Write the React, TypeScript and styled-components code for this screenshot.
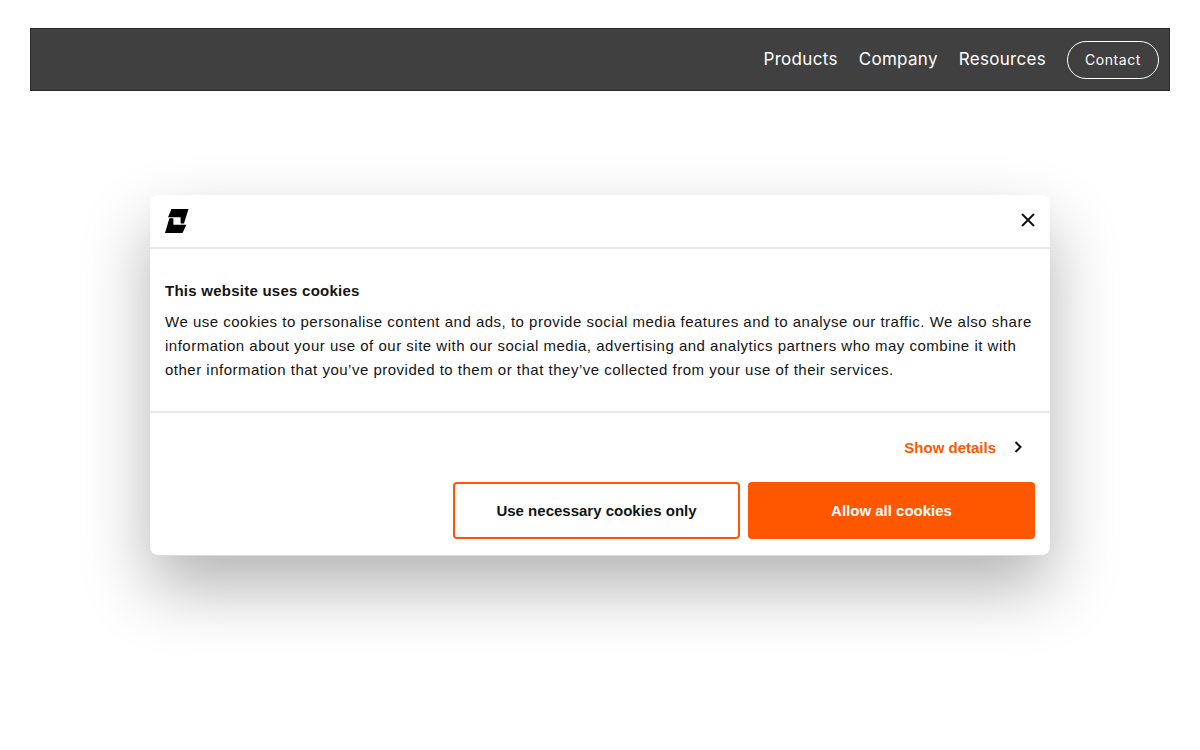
import { FC } from 'react';
import styled, { createGlobalStyle } from 'styled-components';

const GlobalStyle = createGlobalStyle`
  html, body {
    margin: 0;
    padding: 0;
    background: #fff;
  }
  body {
    font-family: 'Liberation Sans', Arial, sans-serif;
  }
`;

const navLinks = ['Products', 'Company', 'Resources'];

const App: FC = () => {
  return (
    <Page>
      <GlobalStyle />
      <Header>
        <Nav>
          {navLinks.map((link) => (
            <NavLink key={link} href="#">
              {link}
            </NavLink>
          ))}
        </Nav>
        <ContactButton>Contact</ContactButton>
      </Header>

      <CookieDialog>
        <DialogTop>
          <svg width="24" height="24" viewBox="0 0 24 24" aria-label="logo">
            <path fill="#000" d="M6.5 0H23.5L19 14.6H15.6V8.2H3Z" />
            <path fill="#000" d="M4.4 9.2H8.4V15.8H21.4L17.5 24H0Z" />
          </svg>
          <CloseButton aria-label="Close">
            <svg width="14" height="14" viewBox="0 0 14 14">
              <path d="M1 1L13 13M13 1L1 13" stroke="#141414" strokeWidth="2" fill="none" />
            </svg>
          </CloseButton>
        </DialogTop>

        <DialogBody>
          <DialogTitle>This website uses cookies</DialogTitle>
          <DialogText>
            We use cookies to personalise content and ads, to provide social media features and to analyse our traffic. We also share
            information about your use of our site with our social media, advertising and analytics partners who may combine it with
            other information that you’ve provided to them or that they’ve collected from your use of their services.
          </DialogText>
        </DialogBody>

        <DialogFooter>
          <DetailsLink href="#">
            Show details
            <Chevron width="8" height="12" viewBox="0 0 8 12">
              <path d="M1.5 1L6.5 6L1.5 11" stroke="#141414" strokeWidth="2" fill="none" />
            </Chevron>
          </DetailsLink>
          <Buttons>
            <ActionButton>Use necessary cookies only</ActionButton>
            <ActionButton $primary>Allow all cookies</ActionButton>
          </Buttons>
        </DialogFooter>
      </CookieDialog>
    </Page>
  );
};

export default App;

const Page = styled.div`
  position: relative;
  height: 750px;
  padding: 28px 30px 0;
  box-sizing: border-box;
  overflow: hidden;
  background: #fff;
`;

const Header = styled.header`
  height: 63px;
  box-sizing: border-box;
  background: #404040;
  border: 1px solid #2a2a2a;
  display: flex;
  align-items: center;
  justify-content: flex-end;
  padding-right: 10px;
`;

const Nav = styled.nav`
  display: flex;
  align-items: center;
  gap: 21px;
  margin-right: 21px;
`;

const NavLink = styled.a`
  font-family: Inter, sans-serif;
  font-size: 17px;
  font-weight: 400;
  line-height: 24px;
  letter-spacing: 0.3px;
  color: #fff;
  text-decoration: none;
  position: relative;
  top: -1px;
`;

const ContactButton = styled.button`
  width: 92px;
  height: 38px;
  border: 1px solid #fff;
  border-radius: 19px;
  background: transparent;
  color: #fff;
  font-family: Inter, sans-serif;
  font-size: 14px;
  font-weight: 400;
  letter-spacing: 0.55px;
  padding: 0;
`;

const CookieDialog = styled.div`
  position: absolute;
  left: 150px;
  top: 195px;
  width: 900px;
  height: 360px;
  background: #fff;
  border-radius: 8px;
  box-shadow: 0 1px 0 #dcdcdc, 0 32px 68px rgba(0, 0, 0, 0.3);
  display: flex;
  flex-direction: column;
  color: #141414;
`;

const DialogTop = styled.div`
  height: 54px;
  box-sizing: border-box;
  border-bottom: 2px solid #e9e9e9;
  padding: 14px 15px 0;
  display: flex;
  justify-content: space-between;
  align-items: flex-start;
`;

const CloseButton = styled.button`
  border: 0;
  background: none;
  padding: 0;
  margin: 4px 0 0;
  width: 14px;
  height: 14px;
  display: flex;
`;

const DialogBody = styled.div`
  height: 164px;
  box-sizing: border-box;
  padding: 33px 15px 0;
  border-bottom: 2px solid #e9e9e9;
`;

const DialogTitle = styled.h2`
  margin: 0 0 10px;
  font-size: 15px;
  line-height: 18px;
  font-weight: 700;
  letter-spacing: 0.25px;
`;

const DialogText = styled.p`
  margin: 0;
  font-size: 15px;
  line-height: 24px;
  letter-spacing: 0.5px;
`;

const DialogFooter = styled.div`
  flex: 1;
  padding: 0 15px;
  display: flex;
  flex-direction: column;
  align-items: flex-end;
`;

const DetailsLink = styled.a`
  display: flex;
  align-items: center;
  gap: 18px;
  margin-top: 25px;
  margin-right: 13px;
  font-size: 15px;
  line-height: 20px;
  font-weight: 700;
  color: #ff5700;
  text-decoration: none;
`;

const Chevron = styled.svg`
  margin-top: -2px;
`;

const Buttons = styled.div`
  display: flex;
  gap: 8px;
  margin-top: 24px;
`;

const ActionButton = styled.button<{ $primary?: boolean }>`
  width: 287px;
  height: 57px;
  box-sizing: border-box;
  border: 2px solid #ff5700;
  border-radius: 4px;
  background: ${(p) => (p.$primary ? '#ff5700' : '#fff')};
  color: ${(p) => (p.$primary ? '#fff' : '#141414')};
  font-family: 'Liberation Sans', Arial, sans-serif;
  font-size: 15px;
  font-weight: 700;
  padding: 0;
`;
